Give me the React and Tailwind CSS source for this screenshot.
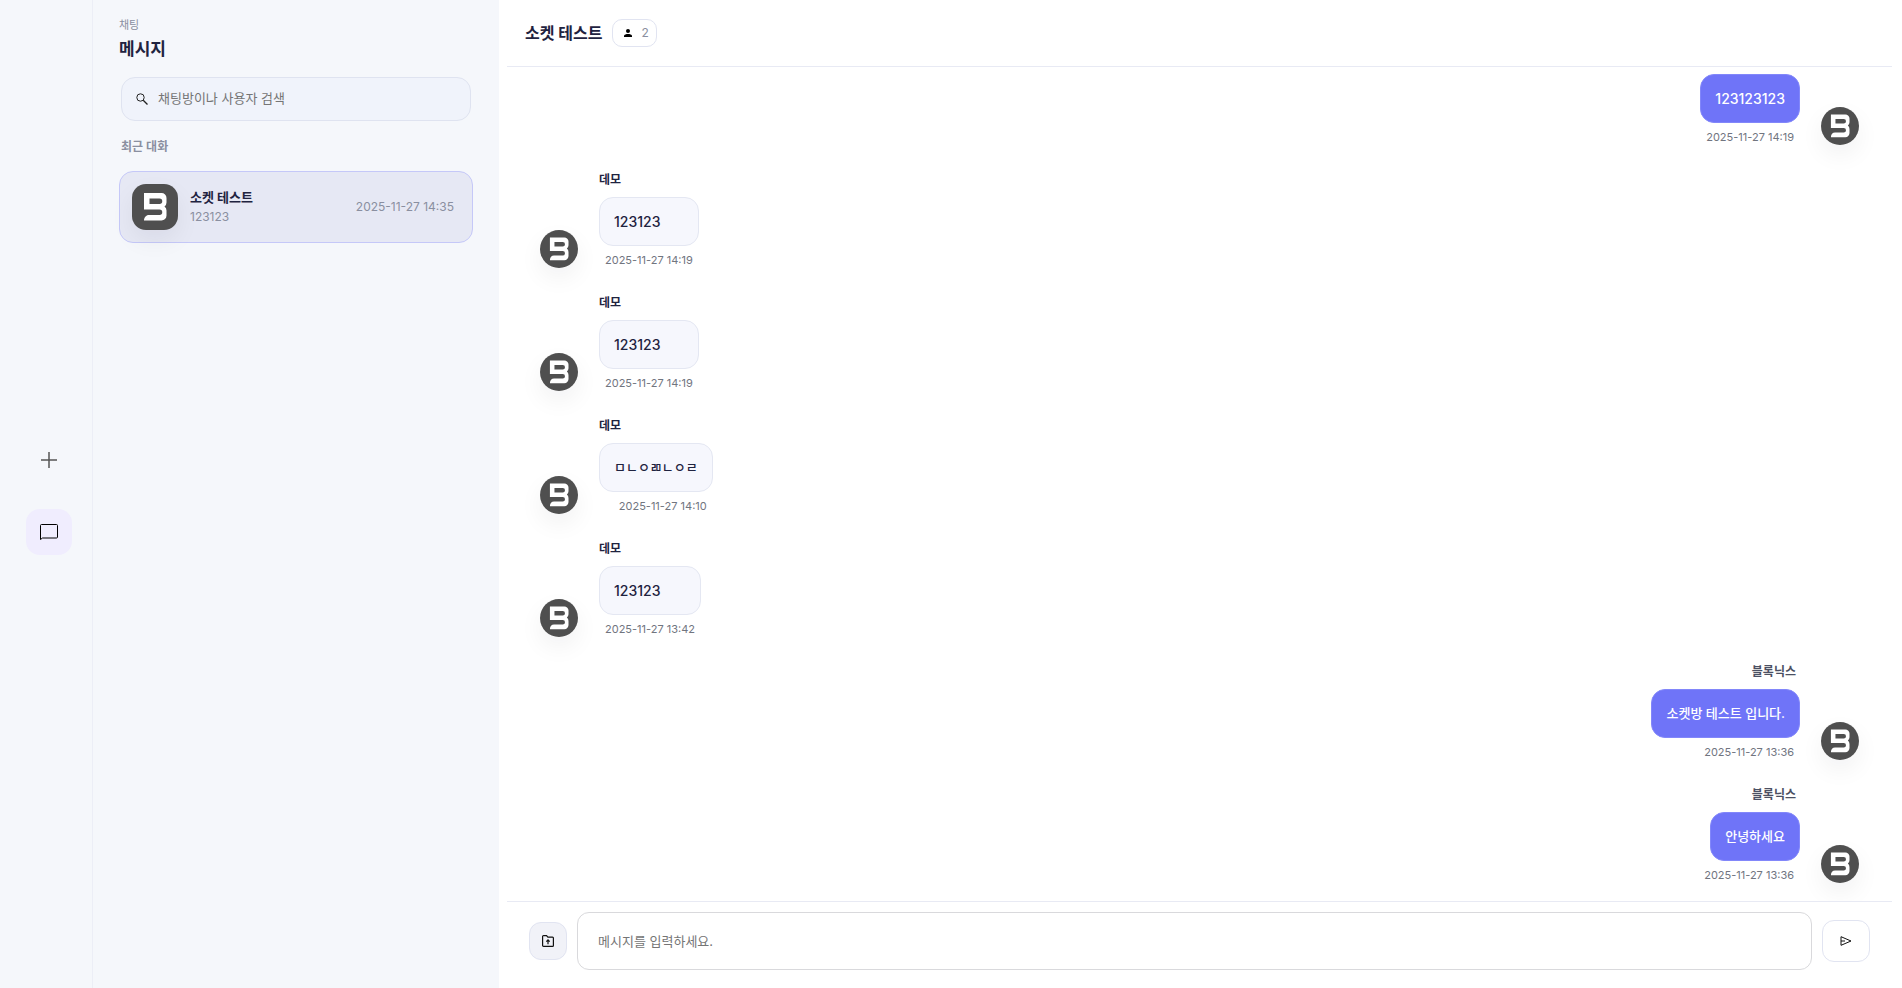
import React from "react";

const rooms = [
  { id: 1, name: "소켓 테스트", last: "123123", time: "2025-11-27 14:35" },
];

const messages = [
  { id: 7, mine: true, text: "123123123", time: "2025-11-27 14:19" },
  { id: 6, name: "데모", text: "123123", time: "2025-11-27 14:19" },
  { id: 5, name: "데모", text: "123123", time: "2025-11-27 14:19" },
  { id: 4, name: "데모", text: "ㅁㄴㅇㄻㄴㅇㄹ", time: "2025-11-27 14:10" },
  { id: 3, name: "데모", text: "123123", time: "2025-11-27 13:42" },
  { id: 2, mine: true, name: "블록닉스", text: "소켓방 테스트 입니다.", time: "2025-11-27 13:36" },
  { id: 1, mine: true, name: "블록닉스", text: "안녕하세요", time: "2025-11-27 13:36" },
];

const Logo = ({ className }) => (
  <svg viewBox="0 0 46 46" className={className} aria-hidden="true">
    <rect width="46" height="46" fill="#4f4f4f" />
    <path
      fill="#fff"
      fillRule="evenodd"
      d="M12 9h17.500a5 5 0 0 1 5 5v4.500a5 5 0 0 1-2 4a5 5 0 0 1 2 4v5a5 5 0 0 1-5 5H12c0-3 2-5.500 5-5.500h10.500a2.500 2.500 0 0 0 0-5.500H12zM17.500 14.500v5.500h10a2.500 2.500 0 0 0 0-5.500z"
    />
  </svg>
);

const Message = ({ message }) => {
  const { mine, name, text, time } = message;
  // hangul runs wider than the digits at the same size
  const textSize = /[ㄱ-힣]/.test(text) ? "text-[13px]" : "text-[14px]";

  return (
    <li className={mine ? "flex flex-row-reverse items-end gap-[21px]" : "flex items-end gap-[21px]"}>
      <Logo className="size-[38px] shrink-0 rounded-full shadow-[0_10px_24px_rgba(15,23,42,0.06)]" />
      <div className={mine ? "flex flex-col items-end" : "flex flex-col items-start"}>
        {name && (
          <p
            className={
              mine
                ? "mb-2 pr-1 text-[12px] leading-[18px] font-semibold text-[#4b5063]"
                : "mb-2 text-[12px] leading-[18px] font-bold text-[#1f2340]"
            }
          >
            {name}
          </p>
        )}
        <div className="flex flex-col">
          <div
            className={
              mine
                ? "self-end rounded-[14px] border border-[#8287fa] bg-[#6f74f8] px-[14px] py-3 font-medium text-white"
                : "rounded-[14px] border border-[#e4e7f2] bg-[#f6f7fd] px-[14px] py-3 font-medium text-[#1f2340]"
            }
          >
            <p className={`${textSize} leading-[23px]`}>{text}</p>
          </div>
          <time className="mt-[6px] px-[6px] text-right text-[11px] leading-4 text-[#71757f]">{time}</time>
        </div>
      </div>
    </li>
  );
};

export default function App() {
  return (
    <div className="flex h-screen bg-white font-['Inter','Noto_Sans_CJK_KR',sans-serif] text-[#1f2340]">
      <nav className="flex w-[93px] shrink-0 flex-col items-center justify-center gap-[26px] border-r border-[#eceef6] bg-[#f5f7fb] pt-1 pl-[6px]">
        <button type="button" aria-label="새 채팅" className="flex size-[46px] items-center justify-center rounded-[14px]">
          <svg viewBox="0 0 16 16" className="size-4" stroke="#555" strokeWidth="1.500">
            <path d="M8 0v16M0 8h16" />
          </svg>
        </button>
        <button
          type="button"
          aria-label="채팅"
          className="flex size-[46px] items-center justify-center rounded-[14px] bg-[#f0edfe]"
        >
          <svg viewBox="0 0 18 16" className="h-4 w-[18px]" fill="none" stroke="#000">
            <path d="M.5 15.500V1.500a1 1 0 0 1 1-1h15a1 1 0 0 1 1 1v11.500a1 1 0 0 1-1 1H2.500z" />
          </svg>
        </button>
      </nav>

      <aside className="w-[406px] shrink-0 bg-[#f5f7fb] px-[26px] pt-4">
        <p className="text-[11px] leading-[18px] text-[#8a8fa0]">채팅</p>
        <h1 className="mt-px text-[17px] leading-7 font-bold">메시지</h1>
        <label className="mx-[2px] mt-[14px] flex h-11 items-center gap-[10px] rounded-[14px] border border-[#dfe3f0] bg-[#f0f3fb] px-[14px]">
          <svg viewBox="0 0 12 12" className="size-3 shrink-0" fill="none" stroke="#222">
            <circle cx="4.500" cy="4.500" r="3.700" />
            <path d="M7.200 7.200l4.300 4.300" strokeWidth="1.300" />
          </svg>
          <input
            type="text"
            aria-label="검색"
            placeholder="채팅방이나 사용자 검색"
            className="min-w-0 flex-1 bg-transparent text-[13px] outline-none placeholder:text-[#757575]"
          />
        </label>
        <h2 className="mx-[2px] mt-[17px] text-[12px] leading-[18px] font-semibold text-[#8a8fa0]">최근 대화</h2>
        <ul className="mt-[15px]">
          {rooms.map((room) => (
            <li key={room.id}>
              <button
                type="button"
                className="flex h-[72px] w-full items-center gap-3 rounded-[14px] border border-[#c5c8f8] bg-[#e6e8f4] pr-[18px] pl-3 text-left"
              >
                <Logo className="size-[46px] shrink-0 rounded-[14px] shadow-[0_10px_24px_rgba(15,23,42,0.06)]" />
                <span className="flex min-w-0 flex-1 flex-col">
                  <span className="text-[13px] leading-5 font-bold">{room.name}</span>
                  <span className="text-[12px] leading-5 text-[#8a8fa0]">{room.last}</span>
                </span>
                <time className="text-[12px] text-[#8a8fa0]">{room.time}</time>
              </button>
            </li>
          ))}
        </ul>
      </aside>

      <main className="flex min-w-0 flex-1 flex-col pr-[10px] pl-2">
        <header className="flex h-[67px] shrink-0 items-center gap-[10px] border-b border-[#e8eaf4] px-[18px]">
          <h2 className="text-[16px] leading-6 font-bold">소켓 테스트</h2>
          <button
            type="button"
            aria-label="참여자 2명"
            className="flex h-7 items-center gap-2 rounded-[10px] border border-[#e1e4f1] pr-[7px] pl-[10px] text-[12px] text-[#8a8fa0]"
          >
            <svg viewBox="0 0 10 8" className="h-2 w-[10px]" fill="#000">
              <circle cx="5" cy="2" r="2" />
              <path d="M1 8V6.800C1 5.400 3.300 4.900 5 4.900s4 .5 4 1.900V8z" />
            </svg>
            2
          </button>
        </header>

        <ul className="flex min-h-0 flex-1 flex-col justify-end gap-[26px] overflow-hidden px-[33px] pb-[18px]">
          {messages.map((message) => (
            <Message key={message.id} message={message} />
          ))}
        </ul>

        <form className="flex shrink-0 items-center gap-[10px] border-t border-[#e8eaf4] px-[22px] pt-[10px] pb-[18px]">
          <button
            type="button"
            aria-label="파일 첨부"
            className="flex size-[38px] shrink-0 items-center justify-center rounded-[12px] border border-[#e1e4f1] bg-[#f1f2f8]"
          >
            <svg viewBox="0 0 12 12" className="size-3" fill="none" stroke="#111" strokeWidth="1.200">
              <path d="M.6 10.500V1.500a.9.9 0 0 1 .9-.9h3l1.400 1.600h4.600a.9.9 0 0 1 .9.9v7.400a.9.9 0 0 1-.9.9h-9a.9.9 0 0 1-.9-.9zM6 9.300V5.200M4.300 6.600L6 4.900l1.700 1.700" />
            </svg>
          </button>
          <input
            type="text"
            aria-label="메시지"
            placeholder="메시지를 입력하세요."
            className="h-[58px] min-w-0 flex-1 rounded-[12px] border border-[#d9d9dc] bg-white px-5 text-[13px] outline-none placeholder:text-[#757575]"
          />
          <button
            type="submit"
            aria-label="보내기"
            className="flex h-[42px] w-12 shrink-0 items-center justify-center rounded-[12px] border border-[#e1e4f1] bg-white"
          >
            <svg viewBox="0 0 12 10" className="h-[10px] w-3" fill="none" stroke="#111">
              <path d="M1 .7L11 5L1 9.300zM1 5h4" />
            </svg>
          </button>
        </form>
      </main>
    </div>
  );
}
